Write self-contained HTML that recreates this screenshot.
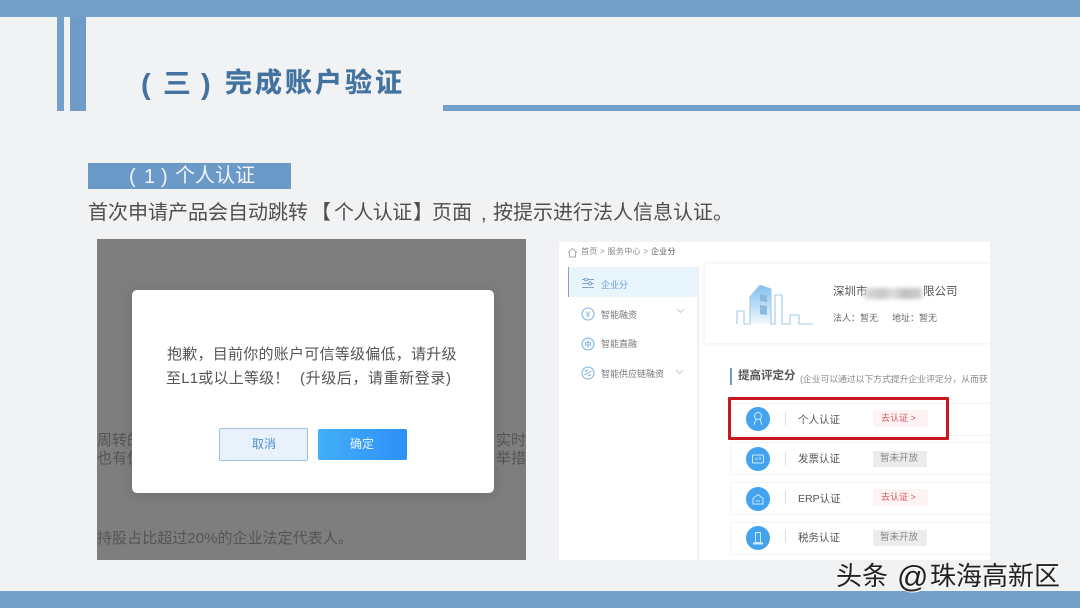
<!DOCTYPE html>
<html lang="zh">
<head>
<meta charset="utf-8">
<style>
html,body{margin:0;padding:0}
body{width:1080px;height:608px;overflow:hidden;position:relative;background:#f1f2f4;font-family:"Liberation Sans","Noto Sans CJK SC",sans-serif}
.a{position:absolute}
.t{position:absolute;white-space:nowrap;line-height:1}
</style>
</head>
<body>
<div class="a" style="left:0;top:0;width:1080px;height:17px;background:#739fc9"></div>
<div class="a" style="left:57px;top:17px;width:7px;height:94px;background:#739fc9"></div>
<div class="a" style="left:70px;top:17px;width:16px;height:94px;background:#6f9cc7"></div>
<div class="a" style="left:443px;top:105px;width:637px;height:6px;background:#739fc9"></div>
<div class="a" style="left:0;top:591px;width:1080px;height:17px;background:#739fc9"></div>

<div class="t" style="left:141px;top:71px;font-size:29px;font-weight:700;color:#42729f">(</div>
<div class="t" style="left:163px;top:70px;font-size:28px;font-weight:700;color:#42729f">三</div>
<div class="t" style="left:201px;top:71px;font-size:29px;font-weight:700;color:#42729f">)</div>
<div class="t" style="left:225px;top:70px;font-size:27px;font-weight:700;color:#42729f;letter-spacing:3px;-webkit-text-stroke:.3px #42729f">完成账户验证</div>

<div class="a" style="left:88px;top:163px;width:203px;height:26px;background:#6c9ac8"></div>
<div class="t" style="left:129px;top:167px;font-size:20px;color:#f2f5f8">(</div>
<div class="t" style="left:144px;top:167px;font-size:20px;color:#f2f5f8">1</div>
<div class="t" style="left:161px;top:167px;font-size:20px;color:#f2f5f8">)</div>
<div class="t" style="left:175px;top:166px;font-size:20px;color:#f2f5f8">个人认证</div>

<div class="t" style="left:88px;top:203px;font-size:20px;color:#4f4f4f">首次申请产品会自动跳转</div>
<div class="t" style="left:311px;top:203px;font-size:20px;color:#4f4f4f">【</div>
<div class="t" style="left:334px;top:203px;font-size:20px;color:#4f4f4f;letter-spacing:-.6px">个人认证</div>
<div class="t" style="left:413px;top:203px;font-size:20px;color:#4f4f4f">】</div>
<div class="t" style="left:432px;top:203px;font-size:20px;color:#4f4f4f">页面</div>
<div class="t" style="left:481px;top:204px;font-size:20px;color:#4f4f4f">,</div>
<div class="t" style="left:493px;top:203px;font-size:20px;color:#4f4f4f">按提示进行法人信息认证。</div>

<!-- left screenshot -->
<div class="a" style="left:97px;top:239px;width:429px;height:321px;background:#7e7e7e;overflow:hidden">
  <div class="t" style="left:0;top:194px;font-size:15px;color:#555">周转的</div>
  <div class="t" style="left:0;top:212px;font-size:15px;color:#555">也有使</div>
  <div class="t" style="left:399px;top:194px;font-size:15px;color:#555">实时</div>
  <div class="t" style="left:399px;top:212px;font-size:15px;color:#555">举措。</div>
  <div class="t" style="left:0;top:292px;font-size:15px;color:#555;letter-spacing:.05px">持股占比超过20%的企业法定代表人。</div>
</div>
<div class="a" style="left:132px;top:290px;width:362px;height:203px;background:#fff;border-radius:5px;box-shadow:0 2px 14px rgba(0,0,0,.12)"></div>
<div class="t" style="left:167px;top:347px;font-size:15px;color:#555;letter-spacing:.25px">抱歉，目前你的账户可信等级偏低，请升级</div>
<div class="t" style="left:166px;top:371px;font-size:15px;color:#555;letter-spacing:.2px">至L1或以上等级！</div>
<div class="t" style="left:300px;top:371px;font-size:15px;color:#555;letter-spacing:.6px">(升级后，请重新登录)</div>
<div class="a" style="left:219px;top:428px;width:87px;height:31px;border:1px solid #9cc1e4;border-radius:2px;background:#e9f2fb"></div>
<div class="t" style="left:252px;top:438px;font-size:12px;color:#4c8fd0">取消</div>
<div class="a" style="left:318px;top:429px;width:89px;height:31px;border-radius:2px;background:linear-gradient(90deg,#44aef9,#2c90f6)"></div>
<div class="t" style="left:350px;top:438px;font-size:12px;color:#eef7ff">确定</div>

<!-- right screenshot -->
<div class="a" style="left:559px;top:239px;width:431px;height:321px;background:#fff;overflow:hidden;filter:blur(.35px)">
  <div class="a" style="left:0;top:0;width:431px;height:3px;background:#f2f3f5"></div>
  <svg class="a" style="left:8px;top:8px" width="11" height="11" viewBox="0 0 11 11"><path d="M1 5.500 5.500 1.500 10 5.500M2.500 5V10H8.500V5" fill="none" stroke="#aaa" stroke-width="1"/></svg>
  <div class="t" style="left:22px;top:9px;font-size:8px;color:#888;letter-spacing:.3px;white-space:pre">首页 &gt; 服务中心 &gt; <span style="color:#555">企业分</span></div>

  <!-- sidebar -->
  <div class="a" style="left:9px;top:28px;width:130px;height:30px;background:#e9f5fd;border-left:1px solid #7fa6c9"></div>
  <div class="a" style="left:138px;top:28px;width:2px;height:293px;background:#eef0f2"></div>
  <svg class="a" style="left:22px;top:39px" width="14" height="11" viewBox="0 0 14 11"><path d="M1 1.500H13M1 5.500H13M1 9.500H13" stroke="#7fa8cc" stroke-width="1"/><circle cx="5" cy="1.500" r="1.500" fill="#e9f5fd" stroke="#7fa8cc"/><circle cx="9" cy="5.500" r="1.500" fill="#e9f5fd" stroke="#7fa8cc"/></svg>
  <div class="t" style="left:42px;top:42px;font-size:9px;color:#6a9bc8">企业分</div>
  <svg class="a" style="left:22px;top:68px" width="14" height="14" viewBox="0 0 14 14"><circle cx="7" cy="7" r="6" fill="none" stroke="#7fb1d8"/><path d="M5 4.500 7 7 9 4.500M7 7V10.500M5 8H9" fill="none" stroke="#7fb1d8" stroke-width=".8"/></svg>
  <div class="t" style="left:42px;top:72px;font-size:9px;color:#777">智能融资</div>
  <svg class="a" style="left:117px;top:69px" width="9" height="6" viewBox="0 0 9 6"><path d="M1 1 4.500 4.500 8 1" fill="none" stroke="#ccc"/></svg>
  <svg class="a" style="left:22px;top:98px" width="14" height="14" viewBox="0 0 14 14"><circle cx="7" cy="7" r="6" fill="#eef6fc" stroke="#7fb1d8"/><path d="M7 3.500V10.500M4.500 5.500H9.500V8H4.500Z" fill="none" stroke="#7fb1d8" stroke-width=".8"/></svg>
  <div class="t" style="left:42px;top:101px;font-size:9px;color:#777">智能直融</div>
  <svg class="a" style="left:22px;top:127px" width="14" height="14" viewBox="0 0 14 14"><circle cx="7" cy="7" r="6" fill="none" stroke="#7fb1d8"/><path d="M3.500 9 10.500 5M4 5.500 7 4M7 10 10 8.500" fill="none" stroke="#7fb1d8"/></svg>
  <div class="t" style="left:42px;top:131px;font-size:9px;color:#777">智能供应链融资</div>
  <svg class="a" style="left:116px;top:130px" width="9" height="6" viewBox="0 0 9 6"><path d="M1 1 4.500 4.500 8 1" fill="none" stroke="#ccc"/></svg>

  <!-- company card -->
  <div class="a" style="left:146px;top:25px;width:285px;height:79px;background:#fff;box-shadow:0 0 4px rgba(0,0,0,.1)"></div>
  <svg class="a" style="left:176px;top:46px" width="82" height="44" viewBox="0 0 82 44">
    <defs><linearGradient id="g" x1="0" y1="0" x2="0" y2="1"><stop offset="0" stop-color="#7fc0ef"/><stop offset="1" stop-color="#f2f9fe"/></linearGradient></defs>
    <path d="M15 39V12L25 0 36 4V39Z" fill="url(#g)"/>
    <path d="M2 39V26H9V39H15V12L25 0 36 4V39H40V10H47V39H55V30H64V39H78" fill="none" stroke="#a3cbe6" stroke-width="1.100"/>
    <path d="M25 9 32 10V17L25 16ZM25 20 32 21V30L25 29Z" fill="#8db9dc"/>
  </svg>
  <div class="t" style="left:274px;top:48px;font-size:11.500px;color:#555">深圳市</div>
  <div class="a" style="left:305px;top:49px;width:58px;height:11px;background:linear-gradient(90deg,#ddd,#c4c4c4 30%,#ddd 50%,#bfbfbf 70%,#ccc);filter:blur(2px)"></div>
  <div class="t" style="left:364px;top:48px;font-size:11.500px;color:#555">限公司</div>
  <div class="t" style="left:274px;top:75px;font-size:9px;color:#666">法人：暂无</div>
  <div class="t" style="left:333px;top:75px;font-size:9px;color:#666">地址：暂无</div>

  <!-- heading -->
  <div class="a" style="left:171px;top:129px;width:2px;height:17px;background:#6f9cc7"></div>
  <div class="t" style="left:179px;top:132px;font-size:11.500px;font-weight:700;color:#555">提高评定分</div>
  <div class="t" style="left:241px;top:136px;font-size:8.800px;color:#888">(企业可以通过以下方式提升企业评定分，从而获</div>

  <!-- rows -->
  <div class="a" style="left:171px;top:164px;width:260px;height:31px;border:1px solid #f4f4f4"></div>
  <div class="a" style="left:171px;top:203px;width:260px;height:31px;border:1px solid #f4f4f4"></div>
  <div class="a" style="left:171px;top:243px;width:260px;height:31px;border:1px solid #f4f4f4"></div>
  <div class="a" style="left:171px;top:283px;width:260px;height:31px;border:1px solid #f4f4f4"></div>

  <div class="a" style="left:187px;top:168px;width:24px;height:24px;border-radius:50%;background:#43a3ee"></div>
  <svg class="a" style="left:187px;top:168px" width="24" height="24" viewBox="0 0 24 24"><circle cx="12" cy="9" r="3.500" fill="none" stroke="#cfe8fb"/><path d="M8 18 10 12M16 18 14 12" fill="none" stroke="#cfe8fb"/></svg>
  <div class="a" style="left:226px;top:173px;width:1px;height:13px;background:#ddd"></div>
  <div class="t" style="left:239px;top:176px;font-size:10.500px;color:#555">个人认证</div>
  <div class="a" style="left:314px;top:171px;width:55px;height:17px;background:#fdf3f2;border-radius:2px"></div>
  <div class="t" style="left:322px;top:175px;font-size:9px;color:#d9525a;white-space:pre">去认证 &gt;</div>

  <div class="a" style="left:187px;top:208px;width:24px;height:24px;border-radius:50%;background:#43a3ee"></div>
  <svg class="a" style="left:187px;top:208px" width="24" height="24" viewBox="0 0 24 24"><rect x="6.500" y="8" width="11" height="8" rx="1" fill="none" stroke="#cfe8fb"/><path d="M9 12H12M14 10V13" stroke="#cfe8fb"/></svg>
  <div class="a" style="left:226px;top:213px;width:1px;height:13px;background:#ddd"></div>
  <div class="t" style="left:239px;top:215px;font-size:10.500px;color:#555">发票认证</div>
  <div class="a" style="left:314px;top:212px;width:54px;height:16px;background:#ececec;border-radius:1px"></div>
  <div class="t" style="left:321px;top:215px;font-size:9.500px;color:#888">暂未开放</div>

  <div class="a" style="left:187px;top:248px;width:24px;height:24px;border-radius:50%;background:#43a3ee"></div>
  <svg class="a" style="left:187px;top:248px" width="24" height="24" viewBox="0 0 24 24"><path d="M7 11.500 12 7.500 17 11.500V17H7ZM10 14H14" fill="none" stroke="#cfe8fb"/></svg>
  <div class="a" style="left:226px;top:252px;width:1px;height:13px;background:#ddd"></div>
  <div class="t" style="left:239px;top:255px;font-size:10.500px;color:#555">ERP认证</div>
  <div class="a" style="left:314px;top:250px;width:55px;height:17px;background:#fdf3f2;border-radius:2px"></div>
  <div class="t" style="left:322px;top:254px;font-size:9px;color:#d9525a;white-space:pre">去认证 &gt;</div>

  <div class="a" style="left:187px;top:287px;width:24px;height:24px;border-radius:50%;background:#43a3ee"></div>
  <svg class="a" style="left:187px;top:287px" width="24" height="24" viewBox="0 0 24 24"><rect x="9.500" y="6.500" width="5" height="10" fill="none" stroke="#cfe8fb"/><path d="M7 17.500H17" stroke="#cfe8fb" stroke-width="2"/></svg>
  <div class="a" style="left:226px;top:291px;width:1px;height:13px;background:#ddd"></div>
  <div class="t" style="left:239px;top:294px;font-size:10.500px;color:#555">税务认证</div>
  <div class="a" style="left:314px;top:291px;width:54px;height:16px;background:#ececec;border-radius:1px"></div>
  <div class="t" style="left:321px;top:294px;font-size:9.500px;color:#888">暂未开放</div>
</div>

<!-- red highlight -->
<div class="a" style="left:728px;top:397px;width:215px;height:37px;border:3px solid #c8171e;border-radius:1px"></div>

<!-- watermark -->
<div class="t" style="left:836px;top:563px;font-size:26px;color:#222;text-shadow:1px 1px 0 #fff">头条</div>
<div class="t" style="left:897px;top:561px;font-size:31px;color:#222;text-shadow:1px 1px 0 #fff">@</div>
<div class="t" style="left:930px;top:563px;font-size:26px;color:#222;text-shadow:1px 1px 0 #fff">珠海高新区</div>
</body>
</html>
